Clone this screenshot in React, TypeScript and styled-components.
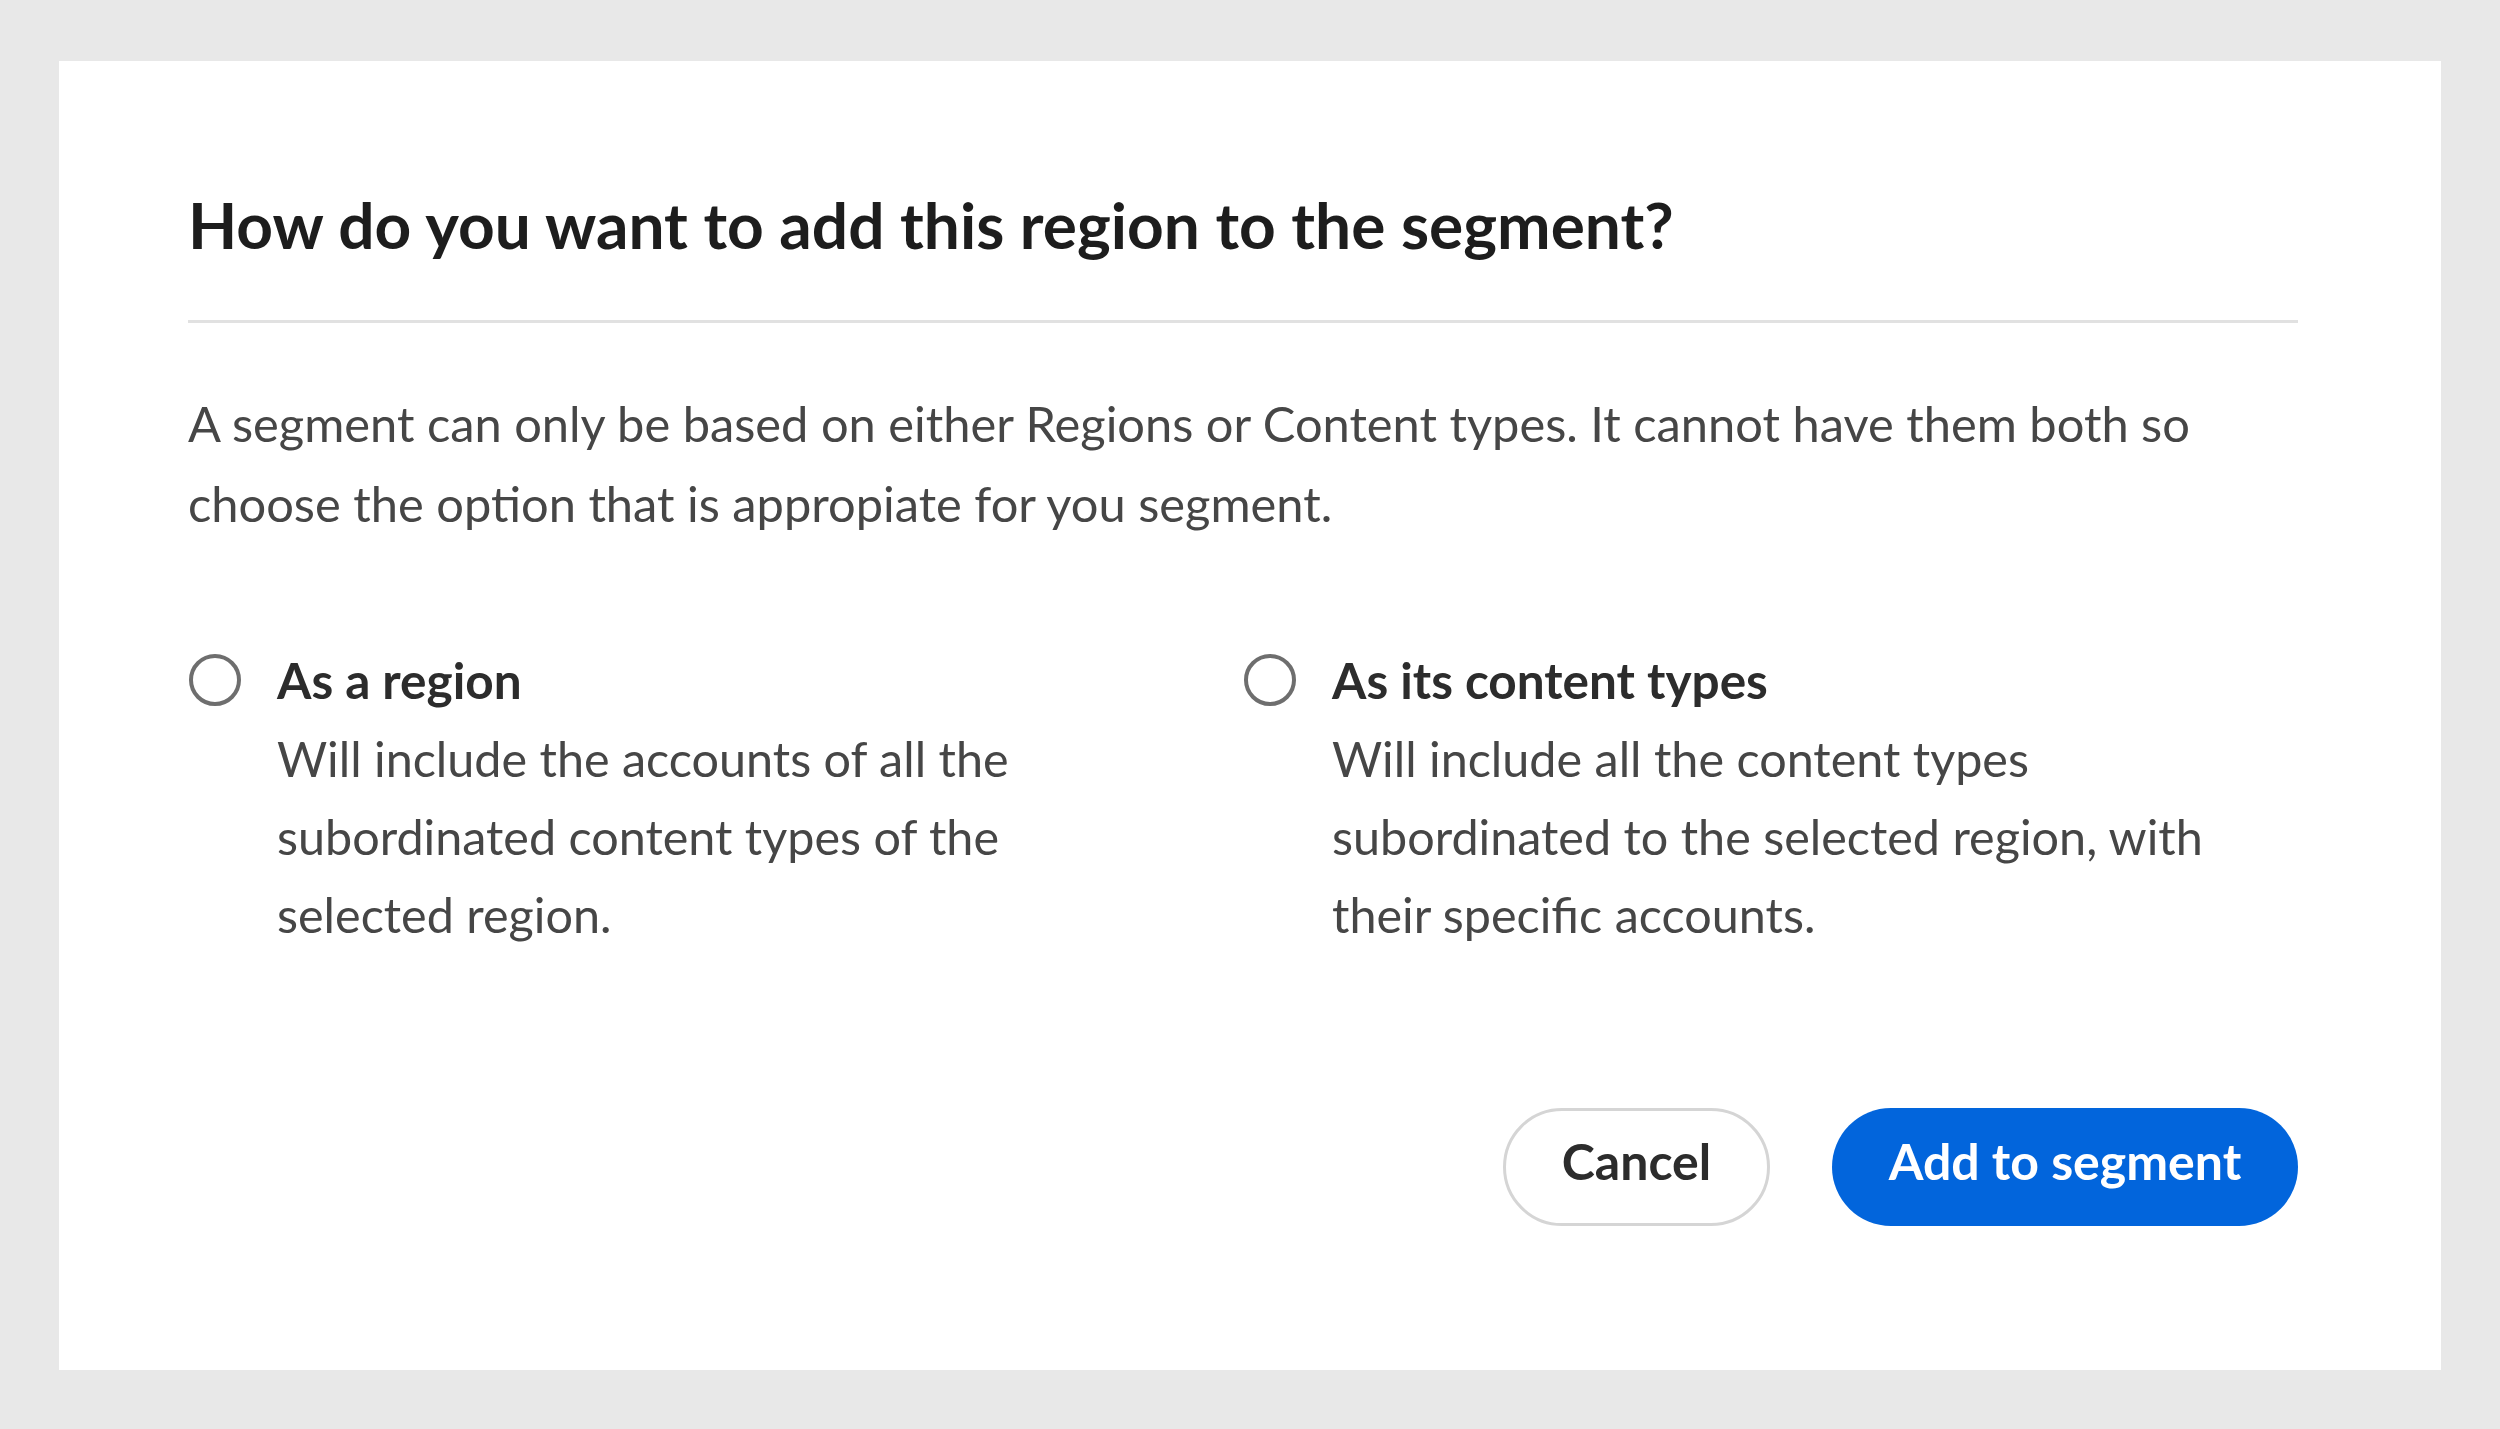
import React, { useState } from 'react';
import styled, { createGlobalStyle } from 'styled-components';

const GlobalStyle = createGlobalStyle`
  html, body {
    margin: 0;
    padding: 0;
    background: #e8e8e8;
  }
  * {
    box-sizing: border-box;
  }
`;

type OptionType = {
  id: string;
  label: string;
  description: string;
};

const OPTIONS: OptionType[] = [
  {
    id: 'region',
    label: 'As a region',
    description: 'Will include the accounts of all the subordinated content types of the selected region.'
  },
  {
    id: 'content-types',
    label: 'As its content types',
    description: 'Will include all the content types subordinated to the selected region, with their specific accounts.'
  }
];

function App() {
  const [selected, setSelected] = useState<string | null>(null);

  return (
    <>
      <GlobalStyle />
      <PageWrapper>
        <DialogWrapper>
          <DialogTitle>How do you want to add this region to the segment?</DialogTitle>
          <Divider />
          <BodyText>
            A segment can only be based on either Regions or Content types. It cannot have them both so
            choose the option that is appropiate for you segment.
          </BodyText>
          <OptionGrid>
            {OPTIONS.map((option) => (
              <OptionItem key={option.id} onClick={() => setSelected(option.id)}>
                <RadioCircle checked={selected === option.id} />
                <OptionText>
                  <p className='option-label'>{option.label}</p>
                  <p className='option-desc'>{option.description}</p>
                </OptionText>
              </OptionItem>
            ))}
          </OptionGrid>
          <ButtonRow>
            <SecondaryButton type='button'>Cancel</SecondaryButton>
            <PrimaryButton type='button'>Add to segment</PrimaryButton>
          </ButtonRow>
        </DialogWrapper>
      </PageWrapper>
    </>
  );
}

export default App;

const PageWrapper = styled.div`
    display: flex;
    flex-direction: column;
    min-height: 100vh;
    padding: 61px 59px 59px;
    font-family: Lato, "Liberation Sans", sans-serif;
`;

const DialogWrapper = styled.div`
    flex: 1;
    display: flex;
    flex-direction: column;
    background-color: #ffffff;
    padding: 124px 143px 144px 129px;
`;

const DialogTitle = styled.h1`
    margin: 0;
    font-size: 64px;
    line-height: 80px;
    font-weight: 700;
    color: #1d1d1d;
`;

const Divider = styled.hr`
    margin: 55px 0 60px;
    border: none;
    height: 3px;
    background-color: #e1e1e1;
`;

const BodyText = styled.p`
    margin: 0;
    max-width: 2060px;
    font-size: 48.8px;
    line-height: 80px;
    color: #464646;
`;

const OptionGrid = styled.div`
    display: grid;
    grid-template-columns: 1fr 1fr;
    margin-top: 98px;
`;

const OptionItem = styled.div`
    display: flex;
    align-items: flex-start;
    gap: 36px;
    cursor: pointer;
`;

const RadioCircle = styled.span<{ checked: boolean }>`
    flex-shrink: 0;
    width: 52px;
    height: 52px;
    margin-top: 13px;
    margin-left: 1px;
    border-radius: 50%;
    border: ${({ checked }) => (checked ? '16px solid #0265dc' : '4px solid #6e6e6e')};
    background-color: #ffffff;
`;

const OptionText = styled.div`
    display: flex;
    flex-direction: column;
    max-width: 880px;
    p {
        margin: 0;
        line-height: 78px;
    }
    .option-label {
        font-size: 49.5px;
        font-weight: 700;
        color: #2c2c2c;
    }
    .option-desc {
        font-size: 48.5px;
        color: #464646;
    }
`;

const ButtonRow = styled.div`
    display: flex;
    justify-content: flex-end;
    gap: 62px;
    margin-top: auto;
`;

const BaseButton = styled.button`
    height: 118px;
    padding: 0 0 12px;
    border-radius: 59px;
    font-family: Lato, "Liberation Sans", sans-serif;
    font-size: 50px;
    font-weight: 700;
    cursor: pointer;
`;

const SecondaryButton = styled(BaseButton)`
    width: 267px;
    border: 3px solid #d5d5d5;
    background-color: #ffffff;
    color: #2c2c2c;
`;

const PrimaryButton = styled(BaseButton)`
    width: 466px;
    border: none;
    background-color: #0265dc;
    color: #ffffff;
`;
